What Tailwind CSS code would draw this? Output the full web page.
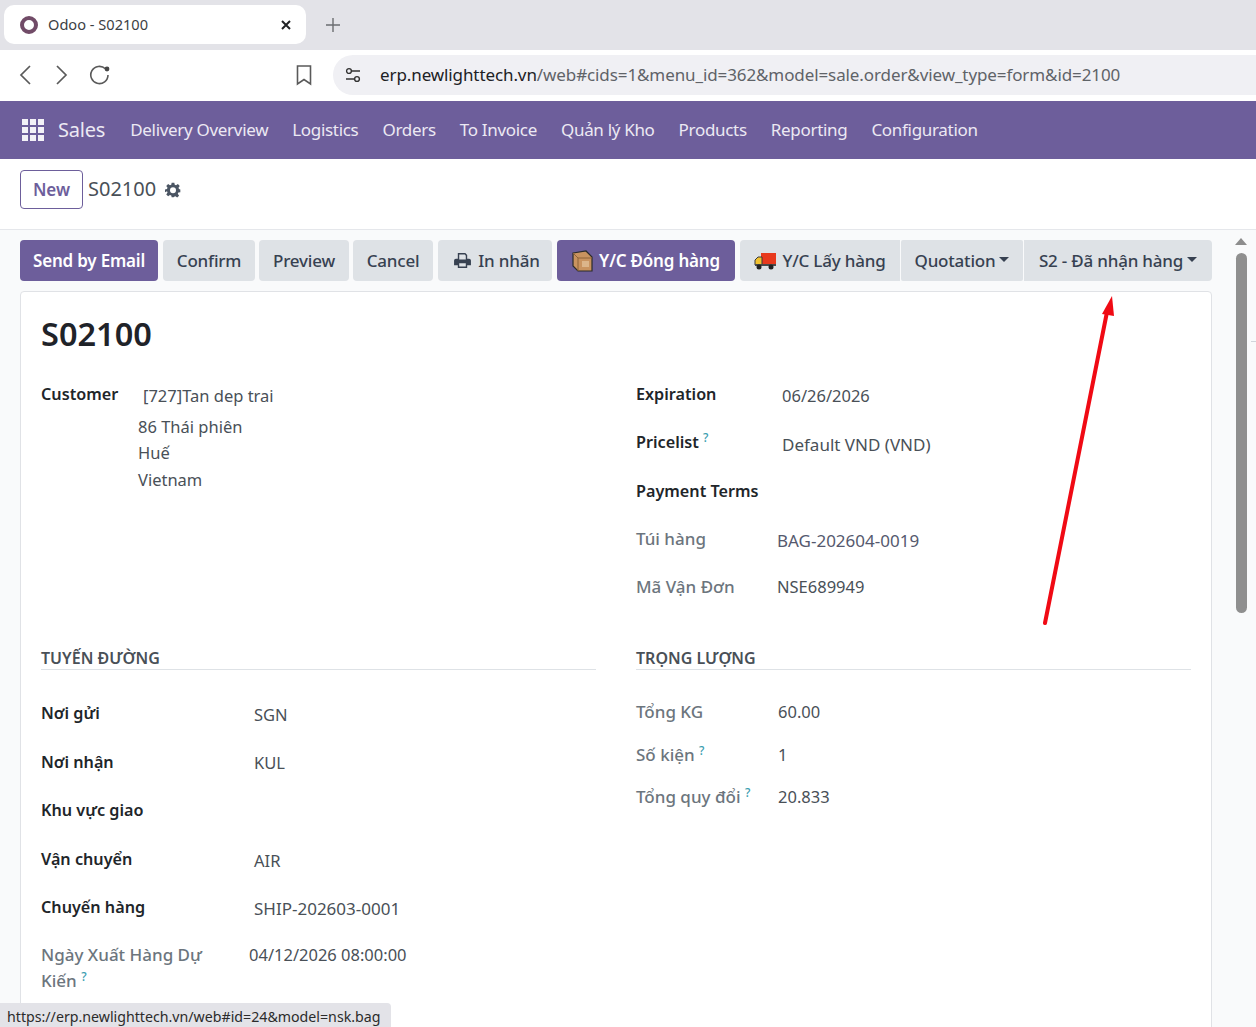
<!DOCTYPE html>
<html lang="en">
<head>
    <meta charset="UTF-8">
    <title>Odoo - S02100</title>
    <script src="https://cdn.jsdelivr.net/npm/@tailwindcss/browser@4"></script>
</head>
<body class="w-[1256px] h-[1027px] overflow-hidden relative flex flex-col font-['Noto_Sans',sans-serif] bg-white text-[#212529]">

    <!-- browser tab strip -->
    <div class="h-[50px] shrink-0 bg-[#e3e3e8] flex items-start pt-[5px] pl-[4px]">
        <div class="w-[302px] h-[39px] bg-white rounded-[10px] flex items-center pl-[16px] pr-[14px] text-[14.6px] text-[#3c4043]">
            <span class="w-[18px] h-[18px] rounded-full border-[4px] border-[#714b67] mr-[10px]"></span>
            <span>Odoo - S02100</span>
            <svg class="ml-auto" width="12" height="12" viewBox="0 0 12 12"><path d="M2 2l8 8M10 2l-8 8" stroke="#202124" stroke-width="2"/></svg>
        </div>
        <svg class="ml-[20px] mt-[13px]" width="14" height="14" viewBox="0 0 14 14"><path d="M7 0v14M0 7h14" stroke="#6b6d70" stroke-width="1.4"/></svg>
    </div>

    <!-- browser toolbar -->
    <div class="h-[51px] shrink-0 bg-white rounded-tl-[10px] flex items-center pl-[18px] pb-[2px]">
        <svg width="14" height="22" viewBox="0 0 14 22" fill="none"><path d="M12 2L3 11l9 9" stroke="#5a5a5a" stroke-width="1.7"/></svg>
        <svg class="ml-[23px]" width="14" height="22" viewBox="0 0 14 22" fill="none"><path d="M2 2l9 9-9 9" stroke="#5a5a5a" stroke-width="1.7"/></svg>
        <svg class="ml-[20px]" width="22" height="22" viewBox="0 0 22 22" fill="none"><path d="M19 11a8.6 8.6 0 1 1-2.6-6.2" stroke="#5a5a5a" stroke-width="1.6"/><circle cx="18" cy="5" r="2.4" fill="#474747"/></svg>
        <svg class="ml-[185px]" width="16" height="22" viewBox="0 0 16 22" fill="none"><path d="M1.500 2h13v18L8 15.500 1.500 20z" stroke="#5a5a5a" stroke-width="1.6"/></svg>
        <div class="ml-[21px] flex-1 h-[40px] bg-[#f0f0f4] rounded-l-[20px] flex items-center pl-[12px] text-[17px] tracking-[-0.1px]">
            <svg width="16" height="16" viewBox="0 0 16 16" fill="none" stroke="#333" stroke-width="1.4"><circle cx="4" cy="4" r="2.4"/><path d="M7 4h8M1 12h8"/><circle cx="12" cy="12" r="2.4"/></svg>
            <span class="ml-[19px] text-[#202124]">erp.newlighttech.vn<span class="text-[#5f6368]">/web#cids=1&amp;menu_id=362&amp;model=sale.order&amp;view_type=form&amp;id=2100</span></span>
        </div>
    </div>

    <!-- odoo navbar -->
    <nav class="h-[58px] shrink-0 bg-[#6d5e9b] flex items-center pl-[22px] text-[17px] tracking-[-0.31px] text-[#ece9f3]">
        <svg width="22" height="22" viewBox="0 0 22 22" fill="#f3f1f7">
            <rect width="6" height="6"/><rect x="8" width="6" height="6"/><rect x="16" width="6" height="6"/>
            <rect y="8" width="6" height="6"/><rect x="8" y="8" width="6" height="6"/><rect x="16" y="8" width="6" height="6"/>
            <rect y="16" width="6" height="6"/><rect x="8" y="16" width="6" height="6"/><rect x="16" y="16" width="6" height="6"/>
        </svg>
        <span class="ml-[14px] text-[20px] tracking-[-0.2px]">Sales</span>
        <div class="ml-[25px] flex gap-[24px]">
            <span>Delivery Overview</span><span>Logistics</span><span>Orders</span><span>To Invoice</span><span>Quản lý Kho</span><span>Products</span><span>Reporting</span><span>Configuration</span>
        </div>
    </nav>

    <!-- control panel -->
    <div class="h-[71px] shrink-0 bg-white border-b border-[#e5e7eb] flex items-start pt-[11px] pl-[20px]">
        <button class="w-[63px] h-[39px] rounded-[4px] border border-[#6d5e9b] text-[#6d5e9b] font-semibold text-[17px]">New</button>
        <span class="ml-[5px] mt-[4px] text-[20px] text-[#495057]">S02100</span>
        <svg class="ml-[9px] mt-[12px]" width="16" height="16" viewBox="0 0 24 24" fill="#4b5563"><path fill-rule="evenodd" d="M10 1h4l.6 3.2 2 .8 2.7-1.9 2.8 2.8-1.9 2.7.8 2L23 11.2v4l-3 .6-.8 2 1.9 2.7-2.8 2.8-2.7-1.9-2 .8L13 23h-3l-.6-2.7-2-.8-2.7 1.9-2.8-2.8 1.9-2.7-.8-2L0 15.2v-4l3-.6.8-2L1.9 5.900l2.800-2.800 2.700 1.900 2-.8zM12 8a4.500 4.500 0 1 0 0 9 4.500 4.500 0 0 0 0-9z"/></svg>
    </div>

    <!-- content -->
    <main class="flex-1 bg-[#f9fafb] pt-[10px] pl-[20px] min-h-0 overflow-hidden">
        <div class="w-[1192px] flex h-[41px] text-[17px] tracking-[-0.2px] font-medium">
            <button class="w-[138px] rounded-[4px] bg-[#6d5e9b] text-white font-semibold">Send by Email</button>
            <button class="ml-[5px] w-[92px] rounded-[4px] bg-[#dee2e6] text-[#374151]">Confirm</button>
            <button class="ml-[4px] w-[90px] rounded-[4px] bg-[#dee2e6] text-[#374151]">Preview</button>
            <button class="ml-[4px] w-[80px] rounded-[4px] bg-[#dee2e6] text-[#374151]">Cancel</button>
            <button class="ml-[5px] w-[114px] pl-[4px] rounded-[4px] bg-[#dee2e6] text-[#374151] flex items-center justify-center gap-[7px]">
                <svg width="17" height="15" viewBox="0 0 18 16" fill="#374151"><path fill-rule="evenodd" d="M4 0h8l2 2v4h2a2 2 0 0 1 2 2v5h-4v3H4v-3H0V8a2 2 0 0 1 2-2h2zm1.500 1.500V7h7V2.800l-1-1.300zM5.500 11v3.500h7V11z"/></svg>
                In nhãn
            </button>
            <button class="ml-[5px] w-[178px] rounded-[4px] bg-[#6d5e9b] text-white font-semibold flex items-center justify-center gap-[6px]">
                <svg width="21" height="22" viewBox="0 0 21 22"><path d="M1 3l13-2 6 6v14H6L1 16z" fill="#c9935f" stroke="#2b2b2b" stroke-width="1.200"/><path d="M1 3l5 5h14M6 8v13" stroke="#8d6238" fill="none"/><rect x="10" y="11" width="7" height="6" fill="#dcb58a"/></svg>
                Y/C Đóng hàng
            </button>
            <button class="ml-[5px] w-[160px] rounded-l-[4px] bg-[#dee2e6] text-[#374151] flex items-center justify-center gap-[6px]">
                <svg width="22" height="18" viewBox="0 0 22 18"><rect x="7" y="1" width="15" height="12" fill="#e8391d"/><path d="M1 13V8l3-3h4v8z" fill="#f2c230" stroke="#3a3a3a"/><rect x="1" y="12" width="21" height="2" fill="#4a4a4a"/><circle cx="5" cy="15" r="2.500" fill="#222"/><circle cx="17" cy="15" r="2.500" fill="#222"/></svg>
                Y/C Lấy hàng
            </button>
            <button class="ml-px w-[122px] bg-[#dee2e6] rounded-[2px] text-[#374151] flex items-center justify-center gap-[4px]">
                Quotation<span class="mt-[-2px] border-x-[5px] border-t-[5px] border-x-transparent border-t-[#374151]"></span>
            </button>
            <button class="ml-px flex-1 bg-[#dee2e6] rounded-r-[4px] text-[#374151] flex items-center justify-center gap-[4px]">
                S2 - Đã nhận hàng<span class="mt-[-2px] border-x-[5px] border-t-[5px] border-x-transparent border-t-[#374151]"></span>
            </button>
        </div>

        <!-- form sheet -->
        <div class="mt-[10px] w-[1192px] h-[800px] bg-white border border-[#e0e2e6] rounded-[4px] px-[20px] text-[16.5px] text-[#495057]">
            <h1 class="h-[84px] pt-[17px] text-[32.5px] leading-[50px] font-semibold text-[#1f2329]">S02100</h1>

            <div class="grid grid-cols-2 gap-x-[40px] h-[270px] pt-[4px]">
                <div class="flex items-start">
                    <span class="w-[102px] pt-[2px] font-semibold text-[16.2px] text-[#212529]">Customer</span>
                    <div class="leading-[26.500px]">
                        <div class="pt-[3px] pb-[4px]">[727]Tan dep trai</div>
                        <div class="-ml-[5px]">86 Thái phiên</div>
                        <div class="-ml-[5px]">Huế</div>
                        <div class="-ml-[5px]">Vietnam</div>
                    </div>
                </div>
                <div class="leading-[26px]">
                    <div class="flex h-[48px]"><span class="w-[146px] pt-px font-semibold text-[16.2px] text-[#212529]">Expiration</span><span class="pt-[3px]">06/26/2026</span></div>
                    <div class="flex h-[49px]"><span class="w-[146px] pt-px font-semibold text-[16.2px] text-[#212529]">Pricelist <sup class="text-[12px] font-medium text-[#3a9db0]">?</sup></span><span class="pt-[4px] text-[17px]">Default VND (VND)</span></div>
                    <div class="flex h-[49px]"><span class="w-[146px] pt-px font-semibold text-[16.2px] text-[#212529]">Payment Terms</span></div>
                    <div class="flex h-[47px]"><span class="w-[141px] text-[17px] font-medium text-[#6c757d]">Túi hàng</span><span class="pt-[2px] text-[17px] text-[#55596e]">BAG-202604-0019</span></div>
                    <div class="flex"><span class="w-[141px] pt-px text-[17px] font-medium text-[#6c757d]">Mã Vận Đơn</span><span class="pt-px">NSE689949</span></div>
                </div>
            </div>

            <div class="grid grid-cols-2 gap-x-[40px]">
                <div>
                    <div class="h-[24px] border-b border-[#dee2e6] text-[16px] leading-[24px] font-semibold text-[#495057]">TUYẾN ĐƯỜNG</div>
                    <div class="pt-[30px] leading-[26px]">
                        <div class="flex h-[49px]"><span class="w-[213px] font-semibold text-[16.2px] text-[#212529]">Nơi gửi</span><span class="pt-[2px]">SGN</span></div>
                        <div class="flex h-[48px]"><span class="w-[213px] font-semibold text-[16.2px] text-[#212529]">Nơi nhận</span><span class="pt-[1px]">KUL</span></div>
                        <div class="flex h-[49px]"><span class="w-[213px] font-semibold text-[16.2px] text-[#212529]">Khu vực giao</span></div>
                        <div class="flex h-[48px]"><span class="w-[213px] font-semibold text-[16.2px] text-[#212529]">Vận chuyển</span><span class="pt-[2px]">AIR</span></div>
                        <div class="flex h-[48px]"><span class="w-[213px] font-semibold text-[16.2px] text-[#212529]">Chuyến hàng</span><span class="pt-[2px] text-[17px]">SHIP-202603-0001</span></div>
                        <div class="flex"><span class="w-[208px] text-[17px] font-medium text-[#6c757d]">Ngày Xuất Hàng Dự<br>Kiến <sup class="text-[12px] text-[#3a9db0]">?</sup></span><span>04/12/2026 08:00:00</span></div>
                    </div>
                </div>
                <div>
                    <div class="h-[24px] border-b border-[#dee2e6] text-[16px] leading-[24px] font-semibold text-[#495057]">TRỌNG LƯỢNG</div>
                    <div class="pt-[29px] leading-[26px]">
                        <div class="flex h-[43px]"><span class="w-[142px] text-[17px] font-medium text-[#6c757d]">Tổng KG</span><span>60.00</span></div>
                        <div class="flex h-[42px]"><span class="w-[142px] text-[17px] font-medium text-[#6c757d]">Số kiện <sup class="text-[12px] text-[#3a9db0]">?</sup></span><span>1</span></div>
                        <div class="flex"><span class="w-[142px] text-[17px] font-medium text-[#6c757d]">Tổng quy đổi <sup class="text-[12px] text-[#3a9db0]">?</sup></span><span>20.833</span></div>
                    </div>
                </div>
            </div>
        </div>
    </main>

    <!-- page scrollbar -->
    <div class="absolute right-0 top-[230px] bottom-0 w-[20px] bg-[#f9fafb]">
        <span class="absolute left-[-1px] top-[8px] border-x-[6px] border-b-[7px] border-x-transparent border-b-[#8d8d8d]"></span>
        <span class="absolute left-0 top-[23px] w-[11px] h-[360px] rounded-full bg-[#8f8f8f]"></span>
        <span class="absolute right-0 top-[111px] w-[5px] h-px bg-[#d1d5db]"></span>
    </div>

    <!-- hand drawn annotation -->
    <svg class="absolute inset-0 pointer-events-none" width="1256" height="1027" viewBox="0 0 1256 1027" fill="none">
        <path d="M1045 623L1107 312" stroke="#f00a14" stroke-width="4" stroke-linecap="round"/>
        <path d="M1112 296L1102 314L1114 316z" fill="#f00a14"/>
    </svg>

    <!-- link status bubble -->
    <div class="absolute left-0 bottom-0 w-[391px] h-[24px] bg-[#e3e3e8] rounded-tr-[4px] pl-[7px] text-[14.2px] leading-[28px] text-[#2b2b2b]">https://erp.newlighttech.vn/web#id=24&amp;model=nsk.bag</div>
</body>
</html>
